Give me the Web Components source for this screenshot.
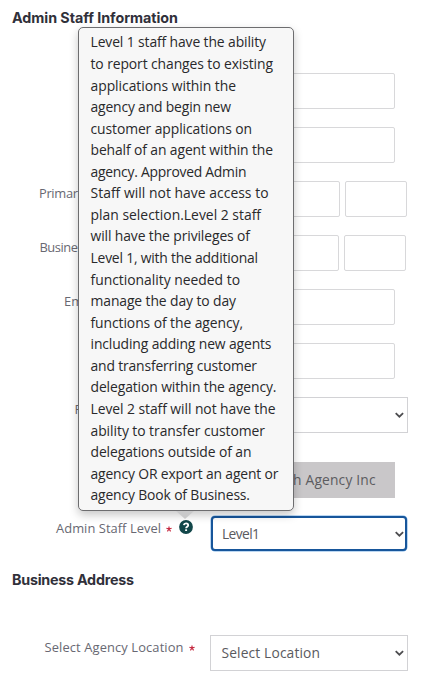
<!DOCTYPE html>
<html lang="en">
<head>
<meta charset="utf-8">
<title>Admin Staff Information</title>
<style>
html,body{margin:0;background:#fff;font-family:"Open Sans","Noto Sans",sans-serif}
</style>
</head>
<body>
<staff-form></staff-form>
<script>
const make = (name, html, ready) => customElements.define(name, class extends HTMLElement {
  connectedCallback() {
    if (this.shadowRoot) return;
    this.attachShadow({mode: 'open'}).innerHTML = html;
    if (ready) ready(this, this.shadowRoot);
  }
});

// One line of text, tracked to fill the width given in its "w" attribute.
make('fit-text', `<style>:host{display:block;white-space:nowrap}span{display:inline-block}</style><span></span>`, (el, root) => {
  const s = root.querySelector('span');
  const text = el.getAttribute('text');
  s.textContent = text;
  const w = parseFloat(el.getAttribute('w'));
  const natural = s.getBoundingClientRect().width;
  if (w && natural) s.style.letterSpacing = ((w - natural) / Math.max(1, text.length - 1)) + 'px';
  if (w) el.style.width = w + 'px';
});

make('section-title', `<style>:host{display:block;height:20px;line-height:20px;padding-left:12px;font:700 14.3px/20px Inter,sans-serif;color:#30303a}</style><slot></slot>`);

make('form-row', `<style>
:host{display:grid;grid-template-columns:210px 1fr;height:36px;margin-bottom:18px}
.l{display:flex;align-items:flex-start;font-size:12.9px;line-height:18px;padding-top:3px;color:#686872;box-sizing:border-box;height:36px}
.c{display:flex;align-items:flex-start}
</style><div class="l"><slot name="label"></slot></div><div class="c"><slot></slot></div>`);

make('text-box', `<style>
:host{display:flex;align-items:center;box-sizing:border-box;height:36px;border:1px solid #d8d8da;border-radius:2px;background:#fff;font-size:13.8px;line-height:20px;color:#5c5c60}
:host([disabled]){background:#c9c7c9;border-color:#c9c7c9;border-radius:0;justify-content:flex-end;padding-right:18.5px;padding-bottom:1px}
</style><slot></slot>`);

make('select-box', `<style>
:host{display:flex;align-items:center;justify-content:space-between;box-sizing:border-box;width:198px;height:36px;border:1px solid #d2d2d5;padding:0 2.5px 0 10.5px;font-size:13.8px;line-height:20px;color:#5a5a5e;background:#fff}
:host([focused]){width:196px;height:35px;margin-left:1px;border:2px solid #17569b;border-radius:4px;padding:0 .5px 0 9px;box-shadow:0 0 0 .5px #78afe5}
svg{display:block;margin-left:auto}
</style><slot></slot><svg width="11" height="8" viewBox="0 0 11 8"><path d="M1.7 2.2 5.4 5.7 9.1 2.2" fill="none" stroke="#4d4d50" stroke-width="1.8"/></svg>`);

make('required-mark', `<style>:host{display:block}svg{display:block}</style><svg width="6" height="6" viewBox="0 0 6 6"><path d="M3 3V.4M3 3 .4 2.2M3 3l2.6-.8M3 3 1.4 5.4M3 3l1.6 2.4" stroke="#c5283f" stroke-width="1.15"/></svg>`);

make('help-icon', `<style>:host{display:block;width:14px;height:14px}svg{display:block}</style><svg width="14" height="14" viewBox="0 0 14 14"><circle cx="7" cy="7" r="6.9" fill="#12474a"/><path d="M4.8 5.2C5 3.9 5.8 3.4 7 3.4c1.3 0 2.2.7 2.2 1.8 0 1.5-2.1 1.5-2.1 3" fill="none" stroke="#fff" stroke-width="1.8"/><rect x="6.1" y="9.2" width="2" height="1.8" rx=".5" fill="#fff"/></svg>`);

make('info-tooltip', `<style>
:host{position:absolute;left:78px;top:27px;width:216px;height:484px;box-sizing:border-box;border:1px solid #6d6d6f;border-radius:5px;background:#f7f7f7;box-shadow:0 4px 10px rgba(0,0,0,.22);padding:3.4px 0 0 11.5px;color:#29292b;font-size:13.9px}
.lines{display:grid;grid-auto-rows:21.57px;line-height:21.57px}
.arrow{position:absolute;left:97px;top:483px;width:18px;height:8px;background:#c9c9ca;clip-path:polygon(0 0,100% 0,50% 100%)}
</style><div class="lines"></div><div class="arrow"></div>`, (el, root) => {
  const lines = [
    ['Level 1 staff have the ability', 175.5], ['to report changes to existing', 182.5],
    ['applications within the', 145.5], ['agency and begin new', 140.5],
    ['customer applications on', 161.5], ['behalf of an agent within the', 182.5],
    ['agency. Approved Admin', 156], ['Staff will not have access to', 178],
    ['plan selection.Level 2 staff', 170.5], ['will have the privileges of', 159.5],
    ['Level 1, with the additional', 167.5], ['functionality needed to', 149.5],
    ['manage the day to day', 145.5], ['functions of the agency,', 152.5],
    ['including adding new agents', 181], ['and transferring customer', 166.5],
    ['delegation within the agency.', 186], ['Level 2 staff will not have the', 185],
    ['ability to transfer customer', 174.5], ['delegations outside of an', 161],
    ['agency OR export an agent or', 188], ['agency Book of Business.', 159.5]
  ];
  root.querySelector('.lines').innerHTML = lines.map(([t, w]) => `<fit-text text="${t}" w="${w}"></fit-text>`).join('');
});

make('staff-form', `<style>
:host{display:block;position:relative;width:442px;height:687px;overflow:hidden;background:#fff}
.rows{padding-top:45px}
.t{padding-top:8px}
</style>
<section-title class="t"><fit-text text="Admin Staff Information" w="166"></fit-text></section-title>
<div class="rows">
<form-row><text-box style="width:185px"></text-box></form-row>
<form-row><text-box style="width:185px"></text-box></form-row>
<form-row><fit-text slot="label" text="Primar" w="39" style="margin-left:39px"></fit-text><text-box style="width:130px"></text-box><text-box style="width:62px;margin-left:5px"></text-box></form-row>
<form-row><fit-text slot="label" text="Busine" w="38.5" style="margin-left:39.5px"></fit-text><text-box style="width:129px"></text-box><text-box style="width:62px;margin-left:5px"></text-box></form-row>
<form-row><fit-text slot="label" text="Em" style="margin-left:64px"></fit-text><text-box style="width:185px"></text-box></form-row>
<form-row><text-box style="width:185px"></text-box></form-row>
<form-row style="margin-bottom:29px"><fit-text slot="label" text="P" style="margin-left:74.5px"></fit-text><select-box></select-box></form-row>
<form-row><text-box disabled style="width:185px"><fit-text text="th Agency Inc" w="87.5"></fit-text></text-box></form-row>
<form-row>
<fit-text slot="label" text="Admin Staff Level" w="105" style="margin-left:56px"></fit-text>
<required-mark slot="label" style="margin:7px 0 0 4.5px"></required-mark>
<help-icon slot="label" style="margin:1px 0 0 7.5px"></help-icon>
<select-box focused><fit-text text="Level1" w="38"></fit-text></select-box></form-row>
<section-title><fit-text text="Business Address" w="122"></fit-text></section-title>
<form-row style="margin-top:45px">
<fit-text slot="label" text="Select Agency Location" w="139" style="margin-left:44.5px"></fit-text>
<required-mark slot="label" style="margin:7px 0 0 5px"></required-mark>
<select-box><fit-text text="Select Location" w="98.5"></fit-text></select-box></form-row>
</div>
<info-tooltip></info-tooltip>`);
</script>
</body>
</html>
